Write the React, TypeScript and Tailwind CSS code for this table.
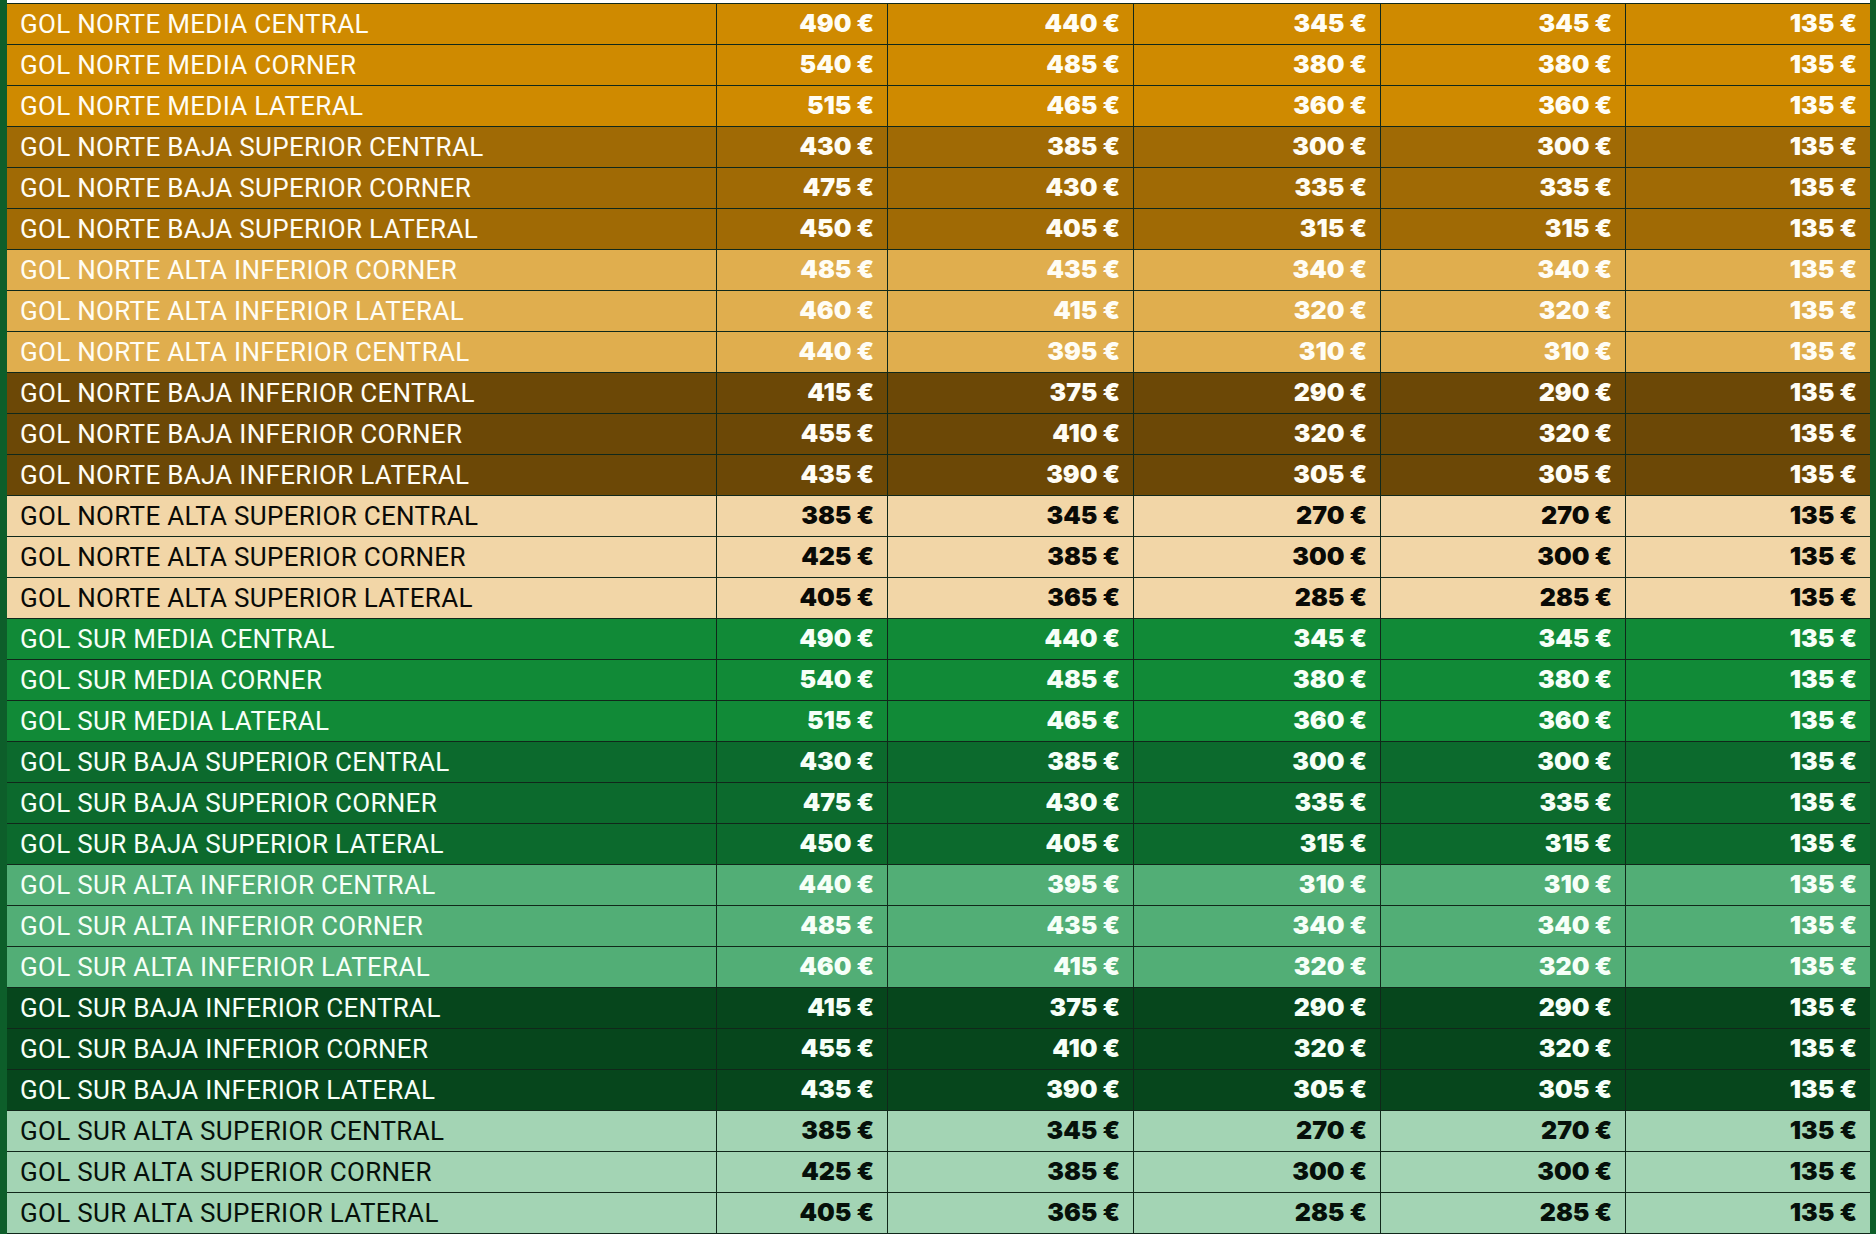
import React from 'react';

type Group = {
  label: string;
  bg: string;
  text: string;
  rows: { name: string; prices: number[] }[];
};

const groups: Group[] = [
  {
    label: 'norte-media',
    bg: 'bg-[#cf8a00]',
    text: 'text-[#fffdf5]',
    rows: [
      { name: 'GOL NORTE MEDIA CENTRAL', prices: [490, 440, 345, 345, 135] },
      { name: 'GOL NORTE MEDIA CORNER', prices: [540, 485, 380, 380, 135] },
      { name: 'GOL NORTE MEDIA LATERAL', prices: [515, 465, 360, 360, 135] },
    ],
  },
  {
    label: 'norte-baja-sup',
    bg: 'bg-[#a06a05]',
    text: 'text-[#fffdf5]',
    rows: [
      { name: 'GOL NORTE BAJA SUPERIOR CENTRAL', prices: [430, 385, 300, 300, 135] },
      { name: 'GOL NORTE BAJA SUPERIOR CORNER', prices: [475, 430, 335, 335, 135] },
      { name: 'GOL NORTE BAJA SUPERIOR LATERAL', prices: [450, 405, 315, 315, 135] },
    ],
  },
  {
    label: 'norte-alta-inf',
    bg: 'bg-[#e0ae4e]',
    text: 'text-[#fffdf5]',
    rows: [
      { name: 'GOL NORTE ALTA INFERIOR CORNER', prices: [485, 435, 340, 340, 135] },
      { name: 'GOL NORTE ALTA INFERIOR LATERAL', prices: [460, 415, 320, 320, 135] },
      { name: 'GOL NORTE ALTA INFERIOR CENTRAL', prices: [440, 395, 310, 310, 135] },
    ],
  },
  {
    label: 'norte-baja-inf',
    bg: 'bg-[#6c4806]',
    text: 'text-[#fffdf5]',
    rows: [
      { name: 'GOL NORTE BAJA INFERIOR CENTRAL', prices: [415, 375, 290, 290, 135] },
      { name: 'GOL NORTE BAJA INFERIOR CORNER', prices: [455, 410, 320, 320, 135] },
      { name: 'GOL NORTE BAJA INFERIOR LATERAL', prices: [435, 390, 305, 305, 135] },
    ],
  },
  {
    label: 'norte-alta-sup',
    bg: 'bg-[#f2d6a7]',
    text: 'text-[#0a0a06]',
    rows: [
      { name: 'GOL NORTE ALTA SUPERIOR CENTRAL', prices: [385, 345, 270, 270, 135] },
      { name: 'GOL NORTE ALTA SUPERIOR CORNER', prices: [425, 385, 300, 300, 135] },
      { name: 'GOL NORTE ALTA SUPERIOR LATERAL', prices: [405, 365, 285, 285, 135] },
    ],
  },
  {
    label: 'sur-media',
    bg: 'bg-[#118a37]',
    text: 'text-[#f6fff8]',
    rows: [
      { name: 'GOL SUR MEDIA CENTRAL', prices: [490, 440, 345, 345, 135] },
      { name: 'GOL SUR MEDIA CORNER', prices: [540, 485, 380, 380, 135] },
      { name: 'GOL SUR MEDIA LATERAL', prices: [515, 465, 360, 360, 135] },
    ],
  },
  {
    label: 'sur-baja-sup',
    bg: 'bg-[#0c6a2d]',
    text: 'text-[#f6fff8]',
    rows: [
      { name: 'GOL SUR BAJA SUPERIOR CENTRAL', prices: [430, 385, 300, 300, 135] },
      { name: 'GOL SUR BAJA SUPERIOR CORNER', prices: [475, 430, 335, 335, 135] },
      { name: 'GOL SUR BAJA SUPERIOR LATERAL', prices: [450, 405, 315, 315, 135] },
    ],
  },
  {
    label: 'sur-alta-inf',
    bg: 'bg-[#52ae76]',
    text: 'text-[#f6fff8]',
    rows: [
      { name: 'GOL SUR ALTA INFERIOR CENTRAL', prices: [440, 395, 310, 310, 135] },
      { name: 'GOL SUR ALTA INFERIOR CORNER', prices: [485, 435, 340, 340, 135] },
      { name: 'GOL SUR ALTA INFERIOR LATERAL', prices: [460, 415, 320, 320, 135] },
    ],
  },
  {
    label: 'sur-baja-inf',
    bg: 'bg-[#06461c]',
    text: 'text-[#f6fff8]',
    rows: [
      { name: 'GOL SUR BAJA INFERIOR CENTRAL', prices: [415, 375, 290, 290, 135] },
      { name: 'GOL SUR BAJA INFERIOR CORNER', prices: [455, 410, 320, 320, 135] },
      { name: 'GOL SUR BAJA INFERIOR LATERAL', prices: [435, 390, 305, 305, 135] },
    ],
  },
  {
    label: 'sur-alta-sup',
    bg: 'bg-[#a3d4b4]',
    text: 'text-[#06100a]',
    rows: [
      { name: 'GOL SUR ALTA SUPERIOR CENTRAL', prices: [385, 345, 270, 270, 135] },
      { name: 'GOL SUR ALTA SUPERIOR CORNER', prices: [425, 385, 300, 300, 135] },
      { name: 'GOL SUR ALTA SUPERIOR LATERAL', prices: [405, 365, 285, 285, 135] },
    ],
  },
];

// column widths measured off the screenshot (border included)
const gridCols = 'grid grid-cols-[710px_171px_246px_247px_245px_244px]';

const PriceRow: React.FC<{ name: string; prices: number[]; bg: string; text: string }> = ({
  name,
  prices,
  bg,
  text,
}) => (
  <div className={`${gridCols} h-[41px] border-b border-[#10281a] ${bg} ${text}`}>
    <div className="flex items-center border-r border-[#10281a] pl-[13px] text-[26px] font-['Roboto',sans-serif] tracking-[0.3px]">
      {name}
    </div>
    {prices.map((p, i) => (
      <div
        key={i}
        className={`flex items-center justify-end pr-[13px] text-[25px] font-black font-['Inter',sans-serif] tracking-[0px] ${
          i < prices.length - 1 ? 'border-r border-[#10281a]' : ''
        }`}
      >
        {p} €
      </div>
    ))}
  </div>
);

export default function App() {
  return (
    <div className="flex w-[1876px] h-[1234px] overflow-hidden bg-white">
      <div className="w-[7px] shrink-0 bg-[#0d5e2a]" />
      <div className="flex-1 pt-[3px] bg-white">
        <div className="border-t border-[#10281a]">
          {groups.map((g) =>
            g.rows.map((r) => (
              <PriceRow key={r.name} name={r.name} prices={r.prices} bg={g.bg} text={g.text} />
            ))
          )}
        </div>
      </div>
      <div className="w-[6px] shrink-0 bg-[#0d5e2a]" />
    </div>
  );
}
